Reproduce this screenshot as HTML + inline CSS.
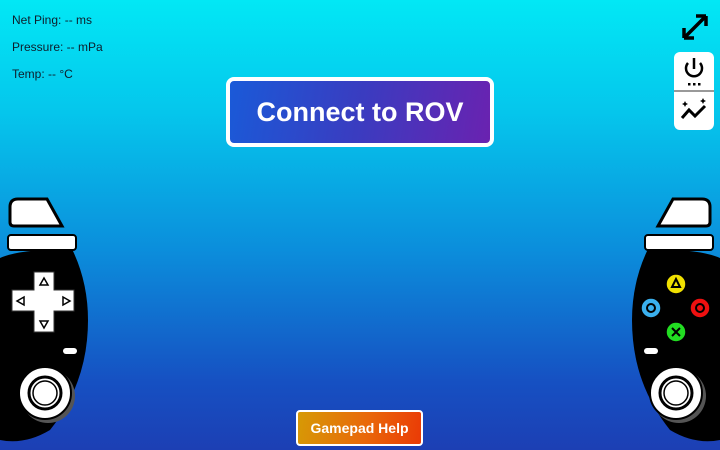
<!DOCTYPE html>
<html><head><style>
body{margin:0;width:720px;height:450px;overflow:hidden;background:linear-gradient(180deg,#02e8f5 0%,#05c6ec 25%,#0b8fdc 55%,#1650c2 85%,#1c3fb4 100%);font-family:"Liberation Sans",sans-serif;position:relative}
.t{position:absolute;left:12px;font-size:12px;color:#0e1e2c}
.btn{position:absolute;left:226px;top:77px;width:268px;height:70px;box-sizing:border-box;border:4px solid #fff;border-radius:8px;background:linear-gradient(100deg,#1a5ad8,#3a3cc0 50%,#6a22b0);color:#fff;font-weight:bold;font-size:27px;text-align:center;line-height:62px}
.gh{position:absolute;left:296px;top:410px;width:127px;height:36px;box-sizing:border-box;border:2px solid #fff;border-radius:4px;background:linear-gradient(100deg,#d69a06,#e9680a 55%,#ea3a06);color:#fff;font-weight:bold;font-size:14px;text-align:center;line-height:32px}
.panel{position:absolute;left:674px;top:52px;width:40px;height:78px;background:#fff;border-radius:6px}
</style></head><body>
<div class="t" style="top:13px">Net Ping: -- ms</div>
<div class="t" style="top:40px">Pressure: -- mPa</div>
<div class="t" style="top:67px">Temp: -- °C</div>
<div class="btn">Connect to ROV</div>
<div class="gh">Gamepad Help</div>
<svg style="position:absolute;left:680px;top:12px" width="30" height="30" viewBox="0 0 30 30"><path d="M4 26L26 4M4 26v-10M4 26h10M26 4h-10M26 4v10" stroke="#000" stroke-width="3.5" fill="none"/></svg>
<div class="panel">
<div style="position:absolute;left:0;top:38px;width:40px;height:2px;background:#999"></div>
<svg style="position:absolute;left:0;top:0" width="40" height="78" viewBox="0 0 40 78"><path d="M14 11a8 8 0 1 0 12 0" stroke="#000" stroke-width="2.5" fill="none"/><path d="M20 6v11" stroke="#000" stroke-width="2.5"/><g fill="#000"><rect x="14" y="31" width="2.5" height="2.5"/><rect x="19" y="31" width="2.5" height="2.5"/><rect x="24" y="31" width="2.5" height="2.5"/></g><path d="M8 66l7-8 6 6 10-10" stroke="#000" stroke-width="3" fill="none"/><path d="M11 49l1 2 2 1-2 1-1 2-1-2-2-1 2-1zM29 46l1 2 2 1-2 1-1 2-1-2-2-1 2-1z" fill="#000"/></svg>
</div>
<svg style="position:absolute;left:0;top:190px" width="100" height="260" viewBox="0 190 100 260">
<path d="M0 258 Q20 249 72 249 Q92 290 87 340 Q82 390 50 430 Q25 445 0 440Z" fill="#000"/>
<path d="M18 199 L47 199 L62 226 L14 226 Q10 226 10 222 L10 207 Q10 199 18 199Z" fill="#fff" stroke="#000" stroke-width="3"/>
<rect x="8" y="235" width="68" height="15" rx="3" fill="#fff" stroke="#000" stroke-width="2"/>
<path d="M34 272h20v18h20v21h-20v21h-20v-21h-22v-21h22z" fill="#fff" stroke="#333" stroke-width="1"/>
<path d="M44 278l-4 7h8z M44 328l-4-7h8z M17 301l7-4v8z M70 301l-7-4v8z" fill="none" stroke="#000" stroke-width="1.5"/>
<rect x="63" y="348" width="14" height="6" rx="3" fill="#fff"/>
<circle cx="48" cy="396" r="27" fill="#555"/>
<circle cx="45" cy="393" r="26" fill="#fff" stroke="#000" stroke-width="2"/>
<circle cx="45" cy="393" r="16" fill="#fff" stroke="#000" stroke-width="3"/>
<circle cx="45" cy="393" r="12" fill="#fff" stroke="#000" stroke-width="1.5"/>
</svg>
<svg style="position:absolute;left:620px;top:190px" width="100" height="260" viewBox="620 190 100 260">
<path d="M720 258 Q700 249 648 249 Q628 290 633 340 Q638 390 670 430 Q695 445 720 440Z" fill="#000"/>
<path d="M702 199 L673 199 L658 226 L706 226 Q710 226 710 222 L710 207 Q710 199 702 199Z" fill="#fff" stroke="#000" stroke-width="3"/>
<rect x="645" y="235" width="68" height="15" rx="3" fill="#fff" stroke="#000" stroke-width="2"/>
<g stroke="#000" stroke-width="1.5">
<circle cx="676" cy="284" r="10" fill="#f0e000"/><circle cx="651" cy="308" r="10" fill="#3ab0ee"/><circle cx="700" cy="308" r="10" fill="#ee1010"/><circle cx="676" cy="332" r="10" fill="#22dd22"/></g>
<path d="M676 279l-4 8h8z" fill="none" stroke="#000" stroke-width="2"/>
<circle cx="651" cy="308" r="4" fill="none" stroke="#000" stroke-width="2"/>
<circle cx="700" cy="308" r="4" fill="none" stroke="#000" stroke-width="2"/>
<path d="M672 328l8 8M680 328l-8 8" stroke="#000" stroke-width="2"/>
<rect x="644" y="348" width="14" height="6" rx="3" fill="#fff"/>
<circle cx="679" cy="396" r="27" fill="#555"/>
<circle cx="676" cy="393" r="26" fill="#fff" stroke="#000" stroke-width="2"/>
<circle cx="676" cy="393" r="16" fill="#fff" stroke="#000" stroke-width="3"/>
<circle cx="676" cy="393" r="12" fill="#fff" stroke="#000" stroke-width="1.5"/>
</svg>
</body></html>
